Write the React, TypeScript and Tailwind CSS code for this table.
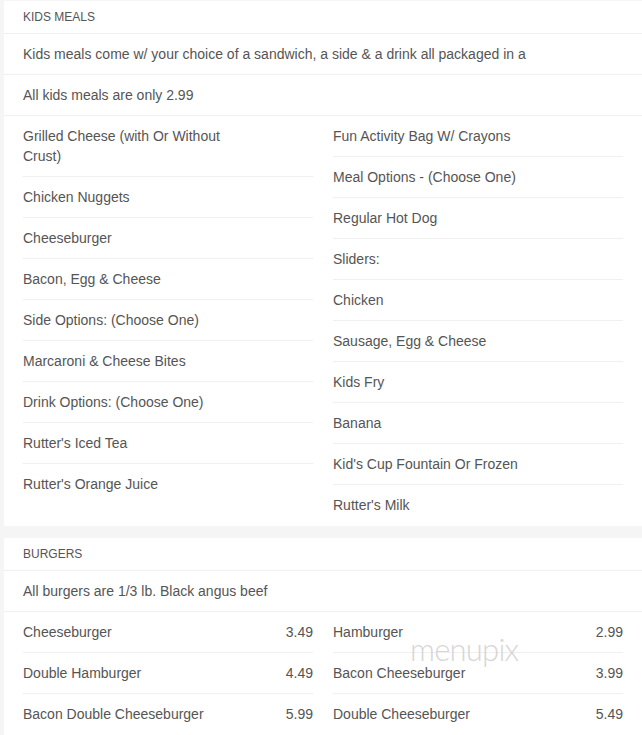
import React from 'react';

type Item = { name: string; price?: string };

const kidsLeft: Item[] = [
  { name: 'Grilled Cheese (with Or Without Crust)' },
  { name: 'Chicken Nuggets' },
  { name: 'Cheeseburger' },
  { name: 'Bacon, Egg & Cheese' },
  { name: 'Side Options: (Choose One)' },
  { name: 'Marcaroni & Cheese Bites' },
  { name: 'Drink Options: (Choose One)' },
  { name: "Rutter's Iced Tea" },
  { name: "Rutter's Orange Juice" },
];

const kidsRight: Item[] = [
  { name: 'Fun Activity Bag W/ Crayons' },
  { name: 'Meal Options - (Choose One)' },
  { name: 'Regular Hot Dog' },
  { name: 'Sliders:' },
  { name: 'Chicken' },
  { name: 'Sausage, Egg & Cheese' },
  { name: 'Kids Fry' },
  { name: 'Banana' },
  { name: "Kid's Cup Fountain Or Frozen" },
  { name: "Rutter's Milk" },
];

const burgersLeft: Item[] = [
  { name: 'Cheeseburger', price: '3.49' },
  { name: 'Double Hamburger', price: '4.49' },
  { name: 'Bacon Double Cheeseburger', price: '5.99' },
];

const burgersRight: Item[] = [
  { name: 'Hamburger', price: '2.99' },
  { name: 'Bacon Cheeseburger', price: '3.99' },
  { name: 'Double Cheeseburger', price: '5.49' },
];

function Column({ items }: { items: Item[] }) {
  return (
    <div className="flex flex-col">
      {items.map((item, i) => (
        <div
          key={item.name}
          className={`flex justify-between py-[10px] text-sm leading-5 ${i < items.length - 1 ? 'border-b border-[#efefef]' : ''}`}
        >
          <span className="max-w-[75%]">{item.name}</span>
          {item.price && <span>{item.price}</span>}
        </div>
      ))}
    </div>
  );
}

function Section({ title, notes, left, right }: { title: string; notes: string[]; left: Item[]; right: Item[] }) {
  return (
    <div className="ml-[4px] bg-white pb-px">
      <div className="border-b border-[#efefef] px-[19px] py-[8px] text-xs leading-4">{title}</div>
      {notes.map((n) => (
        <div key={n} className="border-b border-[#efefef] px-[19px] py-[10px] text-sm leading-5">
          {n}
        </div>
      ))}
      <div className="grid grid-cols-2 gap-x-5 px-[19px]">
        <Column items={left} />
        <Column items={right} />
      </div>
    </div>
  );
}

export default function App() {
  return (
    <div
      className="relative min-h-screen bg-[#f5f5f5] pt-px text-[#555]"
      style={{ fontFamily: '"Liberation Sans", Arial, sans-serif' }}
    >
      <Section
        title="KIDS MEALS"
        notes={[
          'Kids meals come w/ your choice of a sandwich, a side & a drink all packaged in a',
          'All kids meals are only 2.99',
        ]}
        left={kidsLeft}
        right={kidsRight}
      />
      <div className="h-[12px]" />
      <Section
        title="BURGERS"
        notes={['All burgers are 1/3 lb. Black angus beef']}
        left={burgersLeft}
        right={burgersRight}
      />
      <div
        className="pointer-events-none absolute left-[410px] top-[634px] text-[31px] font-light leading-none tracking-tight text-[#d6d6d6]"
        style={{ fontFamily: 'Lato, "Open Sans", sans-serif' }}
      >
        menupix
      </div>
    </div>
  );
}
